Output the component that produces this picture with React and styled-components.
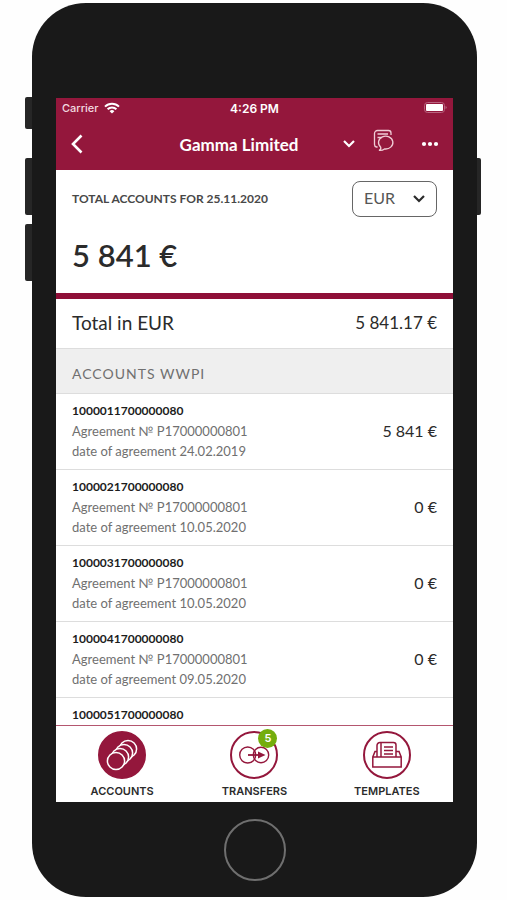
import React, { useState } from 'react';
import styled, { createGlobalStyle, ThemeProvider } from 'styled-components';

const theme = {
  color: {
    primary: '#94173c',
    divider: '#8f0f38',
    white: '#ffffff',
    body: '#191919',
    line: '#dddddd',
    section: '#efefef',
    badge: '#74ad0c',
  },
  textColor: {
    primary: '#2b2b2b',
    muted: '#707070',
  },
  font: {
    main: 'Lato, sans-serif',
    system: 'Inter, sans-serif',
  },
}

const GlobalStyle = createGlobalStyle`
  * {
    box-sizing: border-box;
  }
  body {
    margin: 0;
    background-color: #fefefe;
  }
  h1, h2, h3, p, ul {
    margin: 0;
    padding: 0;
  }
  button {
    border: none;
    background: none;
    padding: 0;
    cursor: pointer;
  }
`

const Page = styled.div`
  display: flex;
  height: 100vh;
  min-height: 600px;
  padding: 3px 26px 3px 25px;
  font-family: ${({ theme }) => theme.font.main};
  color: ${({ theme }) => theme.textColor.primary};
`

const Rail = styled.div`
  display: flex;
  flex-direction: column;
  width: ${({ $width }) => $width}px;
  padding-top: ${({ $top }) => $top}px;
`

const SideKey = styled.div`
  height: ${({ $short }) => ($short ? 32 : 57)}px;
  margin-bottom: ${({ $gap }) => $gap || 0}px;
  background-color: #262626;
  border-radius: ${({ $right }) => ($right ? '0 2px 2px 0' : '2px 0 0 2px')};
`

const Phone = styled.div`
  flex: 1;
  min-width: 0;
  display: flex;
  flex-direction: column;
  padding: 95px 24px 0;
  border-radius: 54px;
  background-color: ${({ theme }) => theme.color.body};
`

const Screen = styled.div`
  flex: 1;
  min-height: 0;
  display: flex;
  flex-direction: column;
  background-color: ${({ theme }) => theme.color.white};
`

const Chin = styled.div`
  display: flex;
  justify-content: center;
  align-items: center;
  height: 95px;
`

const HomeButton = styled.button`
  width: 62px;
  height: 62px;
  border: 2px solid #6f6f6f;
  border-radius: 50%;
`

const TopBar = styled.header`
  background-color: ${({ theme }) => theme.color.primary};
  color: ${({ theme }) => theme.color.white};
`

const StatusBar = styled.div`
  display: grid;
  grid-template-columns: 1fr auto 1fr;
  align-items: center;
  height: 20px;
  padding: 0 6px;
  font-family: ${({ theme }) => theme.font.system};
`

const Carrier = styled.div`
  display: flex;
  align-items: center;
  gap: 5px;
  font-size: 11px;
  font-weight: 500;
  color: #f3d9e0;
`

const Clock = styled.div`
  font-size: 12px;
  font-weight: 600;
`

const BatterySlot = styled.div`
  display: flex;
  justify-content: flex-end;
`

const NavBar = styled.div`
  display: flex;
  align-items: center;
  height: 52px;
  padding: 0 14px;
`

const IconButton = styled.button`
  display: flex;
  align-items: center;
  justify-content: center;
  color: inherit;
`

const CompanyName = styled.h1`
  flex: 1;
  padding-left: 52px;
  text-align: center;
  font-size: 17px;
  font-weight: 700;
`

const NavActions = styled.div`
  display: flex;
  align-items: center;
`

const MessagesButton = styled(IconButton)`
  && {
    padding-bottom: 6px;
    margin: 0 26px 0 17px;
  }
`

const Summary = styled.section`
  height: 129px;
  padding: 11px 16px 0;
  border-bottom: 6px solid ${({ theme }) => theme.color.divider};
`

const SummaryHead = styled.div`
  display: flex;
  justify-content: space-between;
  align-items: center;
`

const SummaryTitle = styled.h2`
  padding-bottom: 2px;
  font-size: 12px;
  font-weight: 700;
  color: #484848;
`

const SelectWrap = styled.label`
  display: grid;
  align-items: center;
  width: 85px;
  height: 36px;
  > * {
    grid-area: 1 / 1;
  }
  svg {
    justify-self: end;
    margin-right: 11px;
    pointer-events: none;
  }
`

const CurrencySelect = styled.select`
  appearance: none;
  width: 100%;
  height: 100%;
  padding: 0 11px 3px;
  border: 1px solid #666666;
  border-radius: 8px;
  background-color: transparent;
  font-family: inherit;
  font-size: 16px;
  color: #565656;
`

const Balance = styled.p`
  padding-top: 18px;
  font-size: 31px;
  line-height: 40px;
  font-weight: 600;
`

const TotalRow = styled.div`
  display: flex;
  justify-content: space-between;
  align-items: center;
  height: 49px;
  padding: 0 16px 2px;
`

const TotalLabel = styled.span`
  font-size: 19px;
`

const SectionTitle = styled.h2`
  height: 46px;
  padding: 5px 16px 0;
  border-top: 1px solid ${({ theme }) => theme.color.line};
  border-bottom: 1px solid ${({ theme }) => theme.color.line};
  background-color: ${({ theme }) => theme.color.section};
  font-size: 14px;
  line-height: 40px;
  font-weight: 400;
  letter-spacing: 1px;
  color: ${({ theme }) => theme.textColor.muted};
`

const AccountList = styled.ul`
  flex: 1;
  min-height: 0;
  overflow: hidden;
  list-style: none;
`

const AccountItem = styled.li`
  display: flex;
  justify-content: space-between;
  align-items: center;
  height: 76px;
  padding: 0 16px 2px;
  border-bottom: 1px solid ${({ theme }) => theme.color.line};
`

const AccountNumber = styled.h3`
  font-size: 12px;
  line-height: 20px;
  font-weight: 700;
  color: #1c1c1c;
`

const AccountDetail = styled.p`
  font-size: 13px;
  line-height: 20px;
  color: ${({ theme }) => theme.textColor.muted};
`

const Amount = styled.span`
  font-size: ${({ $large }) => ($large ? 17 : 16)}px;
`

const TabBar = styled.nav`
  display: flex;
  height: 77px;
  border-top: 1px solid #b4566f;
`

const Tab = styled.button`
  flex: 1;
  display: flex;
  flex-direction: column;
  align-items: center;
  padding-top: 5px;
  font-family: ${({ theme }) => theme.font.system};
  font-size: 11px;
  line-height: 14px;
  font-weight: 600;
  color: ${({ theme }) => theme.textColor.primary};
`

const TabCircle = styled.span`
  position: relative;
  display: flex;
  justify-content: center;
  align-items: center;
  width: 48px;
  height: 48px;
  margin-bottom: 5px;
  border: 2px solid ${({ theme }) => theme.color.primary};
  border-radius: 50%;
  color: ${({ $active, theme }) => ($active ? theme.color.white : theme.color.primary)};
  background-color: ${({ $active, theme }) => ($active ? theme.color.primary : theme.color.white)};
  svg {
    flex-shrink: 0;
  }
`

const Badge = styled.span`
  position: absolute;
  top: -4px;
  right: -1px;
  width: 19px;
  height: 19px;
  border-radius: 50%;
  background-color: ${({ theme }) => theme.color.badge};
  color: ${({ theme }) => theme.color.white};
  font-size: 11px;
  line-height: 19px;
`

const WifiIcon = () => (
  <svg width="16" height="12" viewBox="0 0 16 12" fill="none" stroke="#fff" strokeWidth="2">
    <path d="M1 4.6a10 10 0 0 1 14 0M3.6 7.3a6.2 6.2 0 0 1 8.8 0" />
    <path d="M8 11.6 5.6 9.2a3.4 3.4 0 0 1 4.8 0z" fill="#fff" stroke="none" />
  </svg>
)

const BatteryIcon = () => (
  <svg width="23" height="12" viewBox="0 0 23 12">
    <rect x="0.5" y="0.5" width="20" height="10" rx="3" fill="none" stroke="#b9647f" />
    <rect x="2" y="2" width="17" height="7" rx="1" fill="#fff" />
    <path d="M21.5 4v3q1.2-.3 1.2-1.5t-1.2-1.5z" fill="#b9647f" />
  </svg>
)

const BackIcon = () => (
  <svg width="14" height="20" viewBox="0 0 14 20" fill="none" stroke="currentColor" strokeWidth="2.6">
    <path d="M11.5 1.5 3 10l8.5 8.5" />
  </svg>
)

const ChevronIcon = () => (
  <svg width="14" height="10" viewBox="0 0 14 10" fill="none" stroke="currentColor" strokeWidth="2.2">
    <path d="M2 2l5 5 5-5" />
  </svg>
)

const ChatIcon = () => (
  <svg width="22" height="24" viewBox="0 0 22 24" fill="none" stroke="#f0cdd6" strokeWidth="1.3">
    <path d="M4.6 18H3.5A2.5 2.5 0 0 1 1.5 15.5V4.5A3 3 0 0 1 4.5 1.5H15.5A2.5 2.5 0 0 1 18 4v2" />
    <path d="M4.5 5h10.5M4.5 8.5h4" />
    <path d="M6 21.3c1.500-.4 2-1.8 1.7-3.1A7.2 6.4 0 1 1 11.5 19.9c-1.6 1.3-3.5 1.8-5.5 1.4z" />
  </svg>
)

const MoreIcon = () => (
  <svg width="18" height="6" viewBox="0 0 18 6" fill="currentColor">
    <circle cx="3" cy="3" r="2.1" />
    <circle cx="9" cy="3" r="2.1" />
    <circle cx="15" cy="3" r="2.1" />
  </svg>
)

const AccountsIcon = () => (
  <svg width="34" height="34" viewBox="0 0 34 34" fill="#94173c" stroke="currentColor" strokeWidth="1.5">
    <circle cx="23" cy="11" r="8.6" />
    <circle cx="19" cy="15" r="8.6" />
    <circle cx="15" cy="19" r="8.6" />
    <circle cx="11" cy="23" r="8.6" />
  </svg>
)

const TransfersIcon = () => (
  <svg width="32" height="20" viewBox="0 0 32 20" fill="none" stroke="currentColor" strokeWidth="1.4">
    <circle cx="9.7" cy="10" r="8" />
    <circle cx="23" cy="10" r="7.7" />
    <path d="M10 10h11" strokeWidth="1.8" />
    <path d="M20 6.5l7.5 3.5-7.5 3.5z" fill="currentColor" stroke="none" />
  </svg>
)

const TemplatesIcon = () => (
  <svg width="32" height="28" viewBox="0 0 32 28" fill="none" stroke="currentColor" strokeWidth="1.5">
    <path d="M6 16V4.5A3 3 0 0 1 9 1.5h13.5A2.5 2.5 0 0 1 25 4v12" />
    <path d="M10 16V2" />
    <path d="M13 6h9M13 9.5h9M13 13h9" />
    <path d="M6 10.5H4L1.8 16v10h28.4V16L28 10.5h-3M1.8 16h28.4" />
  </svg>
)

const accounts = [
  { number: '1000011700000080', agreement: 'P17000000801', date: '24.02.2019', amount: '5 841 €' },
  { number: '1000021700000080', agreement: 'P17000000801', date: '10.05.2020', amount: '0 €' },
  { number: '1000031700000080', agreement: 'P17000000801', date: '10.05.2020', amount: '0 €' },
  { number: '1000041700000080', agreement: 'P17000000801', date: '09.05.2020', amount: '0 €' },
  { number: '1000051700000080' },
]

const tabs = [
  { label: 'ACCOUNTS', Icon: AccountsIcon },
  { label: 'TRANSFERS', Icon: TransfersIcon, badge: 5 },
  { label: 'TEMPLATES', Icon: TemplatesIcon },
]

function AccountRow({ account }) {
  return (
    <AccountItem>
      <div>
        <AccountNumber>{account.number}</AccountNumber>
        <AccountDetail>{account.agreement ? `Agreement № ${account.agreement}` : '\u00a0'}</AccountDetail>
        <AccountDetail>{account.date ? `date of agreement ${account.date}` : '\u00a0'}</AccountDetail>
      </div>
      <Amount>{account.amount}</Amount>
    </AccountItem>
  )
}

function App() {
  const [active, setActive] = useState('ACCOUNTS');
  return (
    <ThemeProvider theme={theme}>
      <GlobalStyle />
      <Page>
        <Rail $width={7} $top={94}>
          <SideKey $short $gap={29} />
          <SideKey $gap={9} />
          <SideKey />
        </Rail>
        <Phone>
          <Screen>
            <TopBar>
              <StatusBar>
                <Carrier>Carrier <WifiIcon /></Carrier>
                <Clock>4:26 PM</Clock>
                <BatterySlot><BatteryIcon /></BatterySlot>
              </StatusBar>
              <NavBar>
                <IconButton aria-label="Back"><BackIcon /></IconButton>
                <CompanyName>Gamma Limited</CompanyName>
                <NavActions>
                  <IconButton aria-label="Choose company"><ChevronIcon /></IconButton>
                  <MessagesButton aria-label="Messages"><ChatIcon /></MessagesButton>
                  <IconButton aria-label="More"><MoreIcon /></IconButton>
                </NavActions>
              </NavBar>
            </TopBar>
            <Summary>
              <SummaryHead>
                <SummaryTitle>TOTAL ACCOUNTS FOR 25.11.2020</SummaryTitle>
                <SelectWrap>
                  <CurrencySelect aria-label="Currency" defaultValue="EUR">
                    <option>EUR</option>
                  </CurrencySelect>
                  <ChevronIcon />
                </SelectWrap>
              </SummaryHead>
              <Balance>5 841 €</Balance>
            </Summary>
            <TotalRow>
              <TotalLabel>Total in EUR</TotalLabel>
              <Amount $large>5 841.17 €</Amount>
            </TotalRow>
            <SectionTitle>ACCOUNTS WWPI</SectionTitle>
            <AccountList>
              {accounts.map(account => <AccountRow key={account.number} account={account} />)}
            </AccountList>
            <TabBar>
              {tabs.map(({ label, Icon, badge }) => (
                <Tab key={label} onClick={() => setActive(label)}>
                  <TabCircle $active={active === label}>
                    <Icon />
                    {badge ? <Badge>{badge}</Badge> : null}
                  </TabCircle>
                  {label}
                </Tab>
              ))}
            </TabBar>
          </Screen>
          <Chin>
            <HomeButton aria-label="Home" />
          </Chin>
        </Phone>
        <Rail $width={4} $top={155}>
          <SideKey $right />
        </Rail>
      </Page>
    </ThemeProvider>
  )
}

export default App
